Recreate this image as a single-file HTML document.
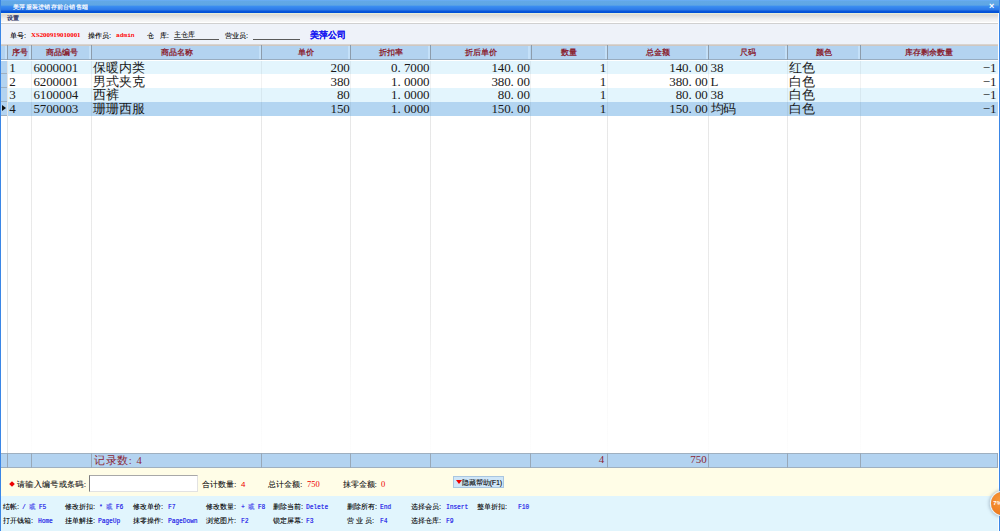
<!DOCTYPE html>
<html><head><meta charset="utf-8">
<style>
*{margin:0;padding:0;box-sizing:border-box}
html,body{width:1000px;height:531px;overflow:hidden;background:#fff;font-family:"Liberation Sans",sans-serif}
.a{position:absolute}
#title{left:0;top:0;width:1000px;height:12.6px;background:linear-gradient(#6aaef8 0px,#62a8e6 1.5px,#5fa6e4 5px,#3a8cf0 6.5px,#2c78e8 10px,#0a56d8 11px,#0050d8 12.6px)}
#title .t{left:13px;top:1.5px;color:#fff;font-size:6.3px;line-height:10px;white-space:nowrap;font-weight:bold;opacity:.92;letter-spacing:0.25px}
#title .x{left:989px;top:1px;color:#fff;font-size:9px;line-height:10px;font-weight:bold}
#menu{left:1px;top:12.6px;width:997px;height:11.2px;background:linear-gradient(#e4ecda 0px,#e4ecda 0.8px,#e2d9d2 1.6px,#dcdcdc 2.4px,#efefef 6px,#f8f8f8 9.2px,#ffffff 9.5px,#ffffff 10.1px,#cfcfcf 10.3px,#d4d4d4 11.2px)}
#menu .t{left:6px;top:1px;font-size:6px;line-height:9px;color:#2a3060;font-weight:bold}
#form{left:1px;top:23.8px;width:997px;height:20.9px;background:#eef2f9;border-bottom:1px solid #d9d4d0}
.lbl{font-size:7px;line-height:9px;color:#000;white-space:nowrap;text-shadow:0.3px 0 rgba(0,0,0,0.45)}
.red{color:#f00;font-weight:bold;font-family:"Liberation Serif",serif;text-shadow:none}
.ul{height:1.2px;background:#5a5a5a}
.lb{left:0;width:1.4px;top:0;height:531px;background:#3a86e6}
.rb{left:998.5px;width:1.5px;top:0;height:531px;background:#3a86e6}
.hd{background:#b3d3f0}
.hc{color:#8a2634;font-size:8px;line-height:9px;text-align:center;white-space:nowrap;font-weight:bold}
.cell{font-family:"Liberation Serif",serif;font-size:13px;line-height:13px;color:#1a1a1a;white-space:nowrap;letter-spacing:-0.1px}
.dot{font-style:normal;display:inline-block;width:6.4px;text-align:left}
.vl{width:1.2px;background:linear-gradient(#e6e6e6,#ebebeb 65%,#f8f8f8 82%,#fdfdfd)}
.help{font-size:7.2px;line-height:9px;color:#000;white-space:nowrap;text-shadow:0.25px 0 rgba(0,0,0,0.4)}
.help i{font-style:normal;display:inline-block;width:4.5px}
.help b{font-weight:normal;color:#2a2ae8;text-shadow:0.35px 0 rgba(40,40,232,0.7);font-family:"Liberation Mono",monospace;font-size:7.4px;display:inline-block;transform:scaleX(0.83);transform-origin:0 50%}
</style></head><body>

<div class="a" id="title"><div class="a t">美萍服装进销存前台销售端</div><div class="a x">×</div></div>
<div class="a" id="menu"><div class="a t">设置</div></div>
<div class="a" id="form"></div>
<div class="a lbl" style="left:10px;top:30.5px">单号:</div>
<div class="a lbl red" style="left:31px;top:30.5px;font-size:6.9px;letter-spacing:-0.05px;margin-top:-0.5px;font-family:'Liberation Serif',serif">XS200919010001</div>
<div class="a lbl" style="left:88px;top:30.5px">操作员:</div>
<div class="a lbl red" style="left:116px;top:30.5px;font-size:6.2px;letter-spacing:0px;font-family:'Liberation Mono',monospace">admin</div>
<div class="a lbl" style="left:147px;top:30.5px">仓&nbsp;&nbsp;&nbsp;库:</div>
<div class="a lbl" style="left:174px;top:29.5px;font-weight:normal;color:#1a1a1a">主仓库</div>
<div class="a ul" style="left:174px;top:39px;width:45px"></div>
<div class="a lbl" style="left:225px;top:30.5px">营业员:</div>
<div class="a ul" style="left:253px;top:39px;width:47px"></div>
<div class="a" style="left:310px;top:30.2px;font-size:8.5px;line-height:11px;font-weight:bold;color:#1a1af0;white-space:nowrap;text-shadow:0.4px 0 #1a1af0">美萍公司</div>
<div class="a hd" style="left:1px;top:44.7px;width:996.5px;height:15.799999999999997px;border-top:1px solid #cfc7c0;border-bottom:1.2px solid #98acc0"></div>
<div class="a" style="left:7.2px;top:45.2px;width:1.1px;height:15.299999999999997px;background:#8c9cac"></div>
<div class="a" style="left:4.9px;top:45.7px;width:2.2px;height:13.799999999999997px;background:#c4e0f8"></div>
<div class="a hc" style="left:7.5px;top:48.300000000000004px;width:24.1px">序号</div>
<div class="a" style="left:31.3px;top:45.2px;width:1.1px;height:15.299999999999997px;background:#8c9cac"></div>
<div class="a" style="left:29.0px;top:45.7px;width:2.2px;height:13.799999999999997px;background:#c4e0f8"></div>
<div class="a hc" style="left:31.6px;top:48.300000000000004px;width:59.99999999999999px">商品编号</div>
<div class="a" style="left:91.3px;top:45.2px;width:1.1px;height:15.299999999999997px;background:#8c9cac"></div>
<div class="a" style="left:89.0px;top:45.7px;width:2.2px;height:13.799999999999997px;background:#c4e0f8"></div>
<div class="a hc" style="left:91.6px;top:48.300000000000004px;width:170.00000000000003px">商品名称</div>
<div class="a" style="left:261.3px;top:45.2px;width:1.1px;height:15.299999999999997px;background:#8c9cac"></div>
<div class="a" style="left:259.0px;top:45.7px;width:2.2px;height:13.799999999999997px;background:#c4e0f8"></div>
<div class="a hc" style="left:261.6px;top:48.300000000000004px;width:89.09999999999997px">单价</div>
<div class="a" style="left:350.4px;top:45.2px;width:1.1px;height:15.299999999999997px;background:#8c9cac"></div>
<div class="a" style="left:348.09999999999997px;top:45.7px;width:2.2px;height:13.799999999999997px;background:#c4e0f8"></div>
<div class="a hc" style="left:350.7px;top:48.300000000000004px;width:79.80000000000001px">折扣率</div>
<div class="a" style="left:430.2px;top:45.2px;width:1.1px;height:15.299999999999997px;background:#8c9cac"></div>
<div class="a" style="left:427.9px;top:45.7px;width:2.2px;height:13.799999999999997px;background:#c4e0f8"></div>
<div class="a hc" style="left:430.5px;top:48.300000000000004px;width:100.29999999999995px">折后单价</div>
<div class="a" style="left:530.5px;top:45.2px;width:1.1px;height:15.299999999999997px;background:#8c9cac"></div>
<div class="a" style="left:528.1999999999999px;top:45.7px;width:2.2px;height:13.799999999999997px;background:#c4e0f8"></div>
<div class="a hc" style="left:530.8px;top:48.300000000000004px;width:76.40000000000009px">数量</div>
<div class="a" style="left:606.9000000000001px;top:45.2px;width:1.1px;height:15.299999999999997px;background:#8c9cac"></div>
<div class="a" style="left:604.6px;top:45.7px;width:2.2px;height:13.799999999999997px;background:#c4e0f8"></div>
<div class="a hc" style="left:607.2px;top:48.300000000000004px;width:101.5px">总金额</div>
<div class="a" style="left:708.4000000000001px;top:45.2px;width:1.1px;height:15.299999999999997px;background:#8c9cac"></div>
<div class="a" style="left:706.1px;top:45.7px;width:2.2px;height:13.799999999999997px;background:#c4e0f8"></div>
<div class="a hc" style="left:708.7px;top:48.300000000000004px;width:78.59999999999991px">尺码</div>
<div class="a" style="left:787.0px;top:45.2px;width:1.1px;height:15.299999999999997px;background:#8c9cac"></div>
<div class="a" style="left:784.6999999999999px;top:45.7px;width:2.2px;height:13.799999999999997px;background:#c4e0f8"></div>
<div class="a hc" style="left:787.3px;top:48.300000000000004px;width:73.30000000000007px">颜色</div>
<div class="a" style="left:860.3000000000001px;top:45.2px;width:1.1px;height:15.299999999999997px;background:#8c9cac"></div>
<div class="a" style="left:858.0px;top:45.7px;width:2.2px;height:13.799999999999997px;background:#c4e0f8"></div>
<div class="a hc" style="left:860.6px;top:48.300000000000004px;width:136.89999999999998px">库存剩余数量</div>
<div class="a" style="left:1px;top:60.5px;width:996.5px;height:392.4px;background:#fff"></div>
<div class="a vl" style="left:7.0px;top:60.5px;height:392.4px"></div>
<div class="a vl" style="left:31.1px;top:60.5px;height:392.4px"></div>
<div class="a vl" style="left:91.1px;top:60.5px;height:392.4px"></div>
<div class="a vl" style="left:261.1px;top:60.5px;height:392.4px"></div>
<div class="a vl" style="left:350.2px;top:60.5px;height:392.4px"></div>
<div class="a vl" style="left:430.0px;top:60.5px;height:392.4px"></div>
<div class="a vl" style="left:530.3px;top:60.5px;height:392.4px"></div>
<div class="a vl" style="left:606.7px;top:60.5px;height:392.4px"></div>
<div class="a vl" style="left:708.2px;top:60.5px;height:392.4px"></div>
<div class="a vl" style="left:786.8px;top:60.5px;height:392.4px"></div>
<div class="a vl" style="left:860.1px;top:60.5px;height:392.4px"></div>
<div class="a" style="left:1px;top:60.5px;width:6.5px;height:13.8px;background:#b3d3f0;border-bottom:1px solid #9fb0c0"></div>
<div class="a" style="left:1px;top:74.3px;width:6.5px;height:13.8px;background:#b3d3f0;border-bottom:1px solid #9fb0c0"></div>
<div class="a" style="left:1px;top:88.1px;width:6.5px;height:13.8px;background:#b3d3f0;border-bottom:1px solid #9fb0c0"></div>
<div class="a" style="left:1px;top:101.9px;width:6.5px;height:13.8px;background:#b3d3f0;border-bottom:1px solid #9fb0c0"></div>
<div class="a" style="left:7.0px;top:60.5px;width:1px;height:392.4px;background:#e4e4e4"></div>
<div class="a" style="left:8.0px;top:60.5px;width:989.5px;height:13.8px;background:#e3f5fd"></div>
<div class="a cell" style="left:9.3px;top:60.8px">1</div>
<div class="a cell" style="left:33.4px;top:60.8px">6000001</div>
<div class="a cell" style="left:93.39999999999999px;top:60.8px">保暖内类</div>
<div class="a cell" style="left:261.6px;top:60.8px;width:88.09999999999997px;text-align:right">200</div>
<div class="a cell" style="left:350.7px;top:60.8px;width:78.80000000000001px;text-align:right">0<i class="dot">.</i>7000</div>
<div class="a cell" style="left:430.5px;top:60.8px;width:99.29999999999995px;text-align:right">140<i class="dot">.</i>00</div>
<div class="a cell" style="left:530.8px;top:60.8px;width:75.40000000000009px;text-align:right">1</div>
<div class="a cell" style="left:607.2px;top:60.8px;width:100.5px;text-align:right">140<i class="dot">.</i>00</div>
<div class="a cell" style="left:710.5px;top:60.8px">38</div>
<div class="a cell" style="left:789.0999999999999px;top:60.8px">红色</div>
<div class="a cell" style="left:860.6px;top:60.8px;width:135.89999999999998px;text-align:right">−1</div>
<div class="a" style="left:8.0px;top:74.3px;width:989.5px;height:13.8px;background:#ffffff"></div>
<div class="a cell" style="left:9.3px;top:74.6px">2</div>
<div class="a cell" style="left:33.4px;top:74.6px">6200001</div>
<div class="a cell" style="left:93.39999999999999px;top:74.6px">男式夹克</div>
<div class="a cell" style="left:261.6px;top:74.6px;width:88.09999999999997px;text-align:right">380</div>
<div class="a cell" style="left:350.7px;top:74.6px;width:78.80000000000001px;text-align:right">1<i class="dot">.</i>0000</div>
<div class="a cell" style="left:430.5px;top:74.6px;width:99.29999999999995px;text-align:right">380<i class="dot">.</i>00</div>
<div class="a cell" style="left:530.8px;top:74.6px;width:75.40000000000009px;text-align:right">1</div>
<div class="a cell" style="left:607.2px;top:74.6px;width:100.5px;text-align:right">380<i class="dot">.</i>00</div>
<div class="a cell" style="left:710.5px;top:74.6px">L</div>
<div class="a cell" style="left:789.0999999999999px;top:74.6px">白色</div>
<div class="a cell" style="left:860.6px;top:74.6px;width:135.89999999999998px;text-align:right">−1</div>
<div class="a" style="left:8.0px;top:88.1px;width:989.5px;height:13.8px;background:#e3f5fd"></div>
<div class="a cell" style="left:9.3px;top:88.39999999999999px">3</div>
<div class="a cell" style="left:33.4px;top:88.39999999999999px">6100004</div>
<div class="a cell" style="left:93.39999999999999px;top:88.39999999999999px">西裤</div>
<div class="a cell" style="left:261.6px;top:88.39999999999999px;width:88.09999999999997px;text-align:right">80</div>
<div class="a cell" style="left:350.7px;top:88.39999999999999px;width:78.80000000000001px;text-align:right">1<i class="dot">.</i>0000</div>
<div class="a cell" style="left:430.5px;top:88.39999999999999px;width:99.29999999999995px;text-align:right">80<i class="dot">.</i>00</div>
<div class="a cell" style="left:530.8px;top:88.39999999999999px;width:75.40000000000009px;text-align:right">1</div>
<div class="a cell" style="left:607.2px;top:88.39999999999999px;width:100.5px;text-align:right">80<i class="dot">.</i>00</div>
<div class="a cell" style="left:710.5px;top:88.39999999999999px">38</div>
<div class="a cell" style="left:789.0999999999999px;top:88.39999999999999px">白色</div>
<div class="a cell" style="left:860.6px;top:88.39999999999999px;width:135.89999999999998px;text-align:right">−1</div>
<div class="a" style="left:8.0px;top:101.9px;width:989.5px;height:13.8px;background:#b3d5f1"></div>
<div class="a cell" style="left:9.3px;top:102.2px">4</div>
<div class="a cell" style="left:33.4px;top:102.2px">5700003</div>
<div class="a cell" style="left:93.39999999999999px;top:102.2px">珊珊西服</div>
<div class="a cell" style="left:261.6px;top:102.2px;width:88.09999999999997px;text-align:right">150</div>
<div class="a cell" style="left:350.7px;top:102.2px;width:78.80000000000001px;text-align:right">1<i class="dot">.</i>0000</div>
<div class="a cell" style="left:430.5px;top:102.2px;width:99.29999999999995px;text-align:right">150<i class="dot">.</i>00</div>
<div class="a cell" style="left:530.8px;top:102.2px;width:75.40000000000009px;text-align:right">1</div>
<div class="a cell" style="left:607.2px;top:102.2px;width:100.5px;text-align:right">150<i class="dot">.</i>00</div>
<div class="a cell" style="left:710.5px;top:102.2px">均码</div>
<div class="a cell" style="left:789.0999999999999px;top:102.2px">白色</div>
<div class="a cell" style="left:860.6px;top:102.2px;width:135.89999999999998px;text-align:right">−1</div>
<div class="a" style="left:31.1px;top:60.5px;width:1px;height:55.2px;background:rgba(0,0,0,0.05)"></div>
<div class="a" style="left:91.1px;top:60.5px;width:1px;height:55.2px;background:rgba(0,0,0,0.05)"></div>
<div class="a" style="left:261.1px;top:60.5px;width:1px;height:55.2px;background:rgba(0,0,0,0.05)"></div>
<div class="a" style="left:350.2px;top:60.5px;width:1px;height:55.2px;background:rgba(0,0,0,0.05)"></div>
<div class="a" style="left:430.0px;top:60.5px;width:1px;height:55.2px;background:rgba(0,0,0,0.05)"></div>
<div class="a" style="left:530.3px;top:60.5px;width:1px;height:55.2px;background:rgba(0,0,0,0.05)"></div>
<div class="a" style="left:606.7px;top:60.5px;width:1px;height:55.2px;background:rgba(0,0,0,0.05)"></div>
<div class="a" style="left:708.2px;top:60.5px;width:1px;height:55.2px;background:rgba(0,0,0,0.05)"></div>
<div class="a" style="left:786.8px;top:60.5px;width:1px;height:55.2px;background:rgba(0,0,0,0.05)"></div>
<div class="a" style="left:860.1px;top:60.5px;width:1px;height:55.2px;background:rgba(0,0,0,0.05)"></div>
<div class="a" style="left:2px;top:105.4px;width:0;height:0;border-top:3.5px solid transparent;border-bottom:3.5px solid transparent;border-left:4px solid #111"></div>
<div class="a hd" style="left:1px;top:452.9px;width:996.5px;height:15.100000000000023px;border-top:1px solid #9fb0c0;border-bottom:1px solid #9fb0c0"></div>
<div class="a" style="left:7.0px;top:452.9px;width:1px;height:15.100000000000023px;background:#98a8b8"></div>
<div class="a" style="left:31.1px;top:452.9px;width:1px;height:15.100000000000023px;background:#98a8b8"></div>
<div class="a" style="left:91.1px;top:452.9px;width:1px;height:15.100000000000023px;background:#98a8b8"></div>
<div class="a" style="left:261.1px;top:452.9px;width:1px;height:15.100000000000023px;background:#98a8b8"></div>
<div class="a" style="left:350.2px;top:452.9px;width:1px;height:15.100000000000023px;background:#98a8b8"></div>
<div class="a" style="left:430.0px;top:452.9px;width:1px;height:15.100000000000023px;background:#98a8b8"></div>
<div class="a" style="left:530.3px;top:452.9px;width:1px;height:15.100000000000023px;background:#98a8b8"></div>
<div class="a" style="left:606.7px;top:452.9px;width:1px;height:15.100000000000023px;background:#98a8b8"></div>
<div class="a" style="left:708.2px;top:452.9px;width:1px;height:15.100000000000023px;background:#98a8b8"></div>
<div class="a" style="left:786.8px;top:452.9px;width:1px;height:15.100000000000023px;background:#98a8b8"></div>
<div class="a" style="left:860.1px;top:452.9px;width:1px;height:15.100000000000023px;background:#98a8b8"></div>
<div class="a" style="left:997.0px;top:452.9px;width:1px;height:15.100000000000023px;background:#98a8b8"></div>
<div class="a cell" style="left:94px;top:453.9px;color:#8a2634;font-size:10.6px;letter-spacing:0.6px">记录数:</div>
<div class="a cell" style="left:136.5px;top:453.9px;color:#8a2634;font-size:10.6px;letter-spacing:0">4</div>
<div class="a cell" style="left:530.8px;top:453.4px;width:73.40000000000009px;text-align:right;color:#8a2634;font-size:11px;letter-spacing:0">4</div>
<div class="a cell" style="left:607.2px;top:453.4px;width:99.5px;text-align:right;color:#8a2634;font-size:11px;letter-spacing:0">750</div>
<div class="a" style="left:1px;top:468px;width:997px;height:28.3px;background:#fffde7"></div>
<div class="a" style="left:10px;top:482px;width:4px;height:4px;background:#e00;transform:rotate(45deg)"></div>
<div class="a lbl" style="left:17px;top:479.5px;font-size:8px;line-height:10px;font-weight:normal;color:#1a1a1a;letter-spacing:0.35px">请输入编号或条码:</div>
<div class="a" style="left:88.5px;top:474.5px;width:109px;height:17.5px;background:#fff;border:1px solid #e2e2e2;border-top:1.2px solid #a8a8a8;border-left:1.6px solid #7c7c7c"></div>
<div class="a lbl" style="left:202px;top:479.5px;font-size:8px;line-height:10px;font-weight:normal;color:#222">合计数量:</div>
<div class="a lbl" style="left:241px;top:479.5px;font-size:8px;line-height:10px;color:#e00;text-shadow:none">4</div>
<div class="a lbl" style="left:268px;top:479.5px;font-size:8px;line-height:10px;font-weight:normal;color:#222">总计金额:</div>
<div class="a lbl" style="left:307px;top:479.3px;font-size:8.5px;line-height:10px;color:#e00;text-shadow:none;font-family:'Liberation Serif',serif">750</div>
<div class="a lbl" style="left:342.5px;top:479.5px;font-size:8px;line-height:10px;font-weight:normal;color:#222">抹零金额:</div>
<div class="a lbl" style="left:381px;top:479.3px;font-size:8.5px;line-height:10px;color:#e00;text-shadow:none;font-family:'Liberation Serif',serif">0</div>
<div class="a" style="left:452.5px;top:475.8px;width:51px;height:12.5px;background:#cfe6f8;border:1px solid #a9c6e0"></div>
<div class="a" style="left:455.5px;top:480px;width:0;height:0;border-left:3px solid transparent;border-right:3px solid transparent;border-top:4px solid #e00"></div>
<div class="a lbl" style="left:462px;top:477.5px;font-size:7px;line-height:9px;color:#111;letter-spacing:-0.1px">隐藏帮助(F1)</div>
<div class="a" style="left:1px;top:496.2px;width:997px;height:35px;background:#e1f5fd"></div>
<div class="a help" style="left:3px;top:501.6px">结帐<i>:</i></div>
<div class="a help" style="left:21.6px;top:501.6px"><b>/ 或 F5</b></div>
<div class="a help" style="left:65px;top:501.6px">修改折扣<i>:</i></div>
<div class="a help" style="left:99px;top:501.6px"><b>* 或 F6</b></div>
<div class="a help" style="left:133px;top:501.6px">修改单价<i>:</i></div>
<div class="a help" style="left:168px;top:501.6px"><b>F7</b></div>
<div class="a help" style="left:206px;top:501.6px">修改数量<i>:</i></div>
<div class="a help" style="left:241px;top:501.6px"><b>+ 或 F8</b></div>
<div class="a help" style="left:273px;top:501.6px">删除当前<i>:</i></div>
<div class="a help" style="left:306px;top:501.6px"><b>Delete</b></div>
<div class="a help" style="left:347px;top:501.6px">删除所有<i>:</i></div>
<div class="a help" style="left:380px;top:501.6px"><b>End</b></div>
<div class="a help" style="left:411px;top:501.6px">选择会员<i>:</i></div>
<div class="a help" style="left:446px;top:501.6px"><b>Insert</b></div>
<div class="a help" style="left:477px;top:501.6px">整单折扣<i>:</i></div>
<div class="a help" style="left:518px;top:501.6px"><b>F10</b></div>
<div class="a help" style="left:3px;top:515.8px">打开钱箱<i>:</i></div>
<div class="a help" style="left:38px;top:515.8px"><b>Home</b></div>
<div class="a help" style="left:65px;top:515.8px">挂单解挂<i>:</i></div>
<div class="a help" style="left:98px;top:515.8px"><b>PageUp</b></div>
<div class="a help" style="left:133px;top:515.8px">抹零操作<i>:</i></div>
<div class="a help" style="left:168px;top:515.8px"><b>PageDown</b></div>
<div class="a help" style="left:206px;top:515.8px">浏览图片<i>:</i></div>
<div class="a help" style="left:241px;top:515.8px"><b>F2</b></div>
<div class="a help" style="left:273px;top:515.8px">锁定屏幕<i>:</i></div>
<div class="a help" style="left:306px;top:515.8px"><b>F3</b></div>
<div class="a help" style="left:347px;top:515.8px">营&nbsp;业&nbsp;员<i>:</i></div>
<div class="a help" style="left:380px;top:515.8px"><b>F4</b></div>
<div class="a help" style="left:411px;top:515.8px">选择仓库<i>:</i></div>
<div class="a help" style="left:446px;top:515.8px"><b>F9</b></div>
<div class="a lb"></div><div class="a rb"></div>
<div class="a" style="left:991px;top:492.3px;width:22.6px;height:22.6px;border-radius:50%;background:radial-gradient(circle at 40% 35%,#f89a3c,#ee7a1e 70%);box-shadow:0 0 0 1.2px rgba(240,248,252,0.9),0 0 3px 2.2px rgba(130,150,170,0.5)"></div>
<div class="a" style="left:993.3px;top:498.5px;font-size:6px;line-height:8px;color:#fff;font-weight:bold">7%</div>
</body></html>
